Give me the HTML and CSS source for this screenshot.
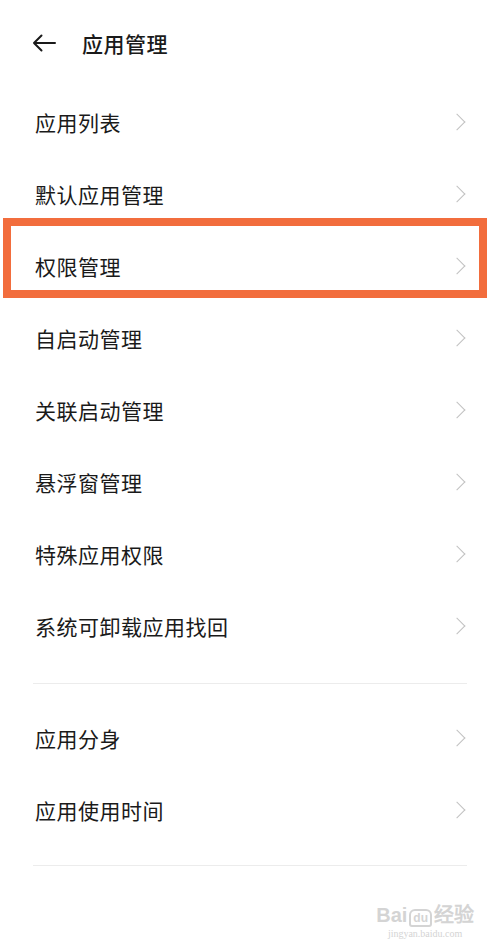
FILE: index.html
```html
<!DOCTYPE html>
<html lang="zh-CN">
<head>
  <meta charset="UTF-8" />
  <meta name="viewport" content="width=device-width, initial-scale=1.0"/>
  <title>应用管理</title>
  <link rel="stylesheet" href="styles.css">
</head>
<body>

  <div class="header">
    <svg class="back" width="24" height="18" viewBox="0 0 24 18">
      <path d="M23 9H2M9.5 1.5L2 9l7.5 7.5" fill="none" stroke="#1a1a1a" stroke-width="2" stroke-linecap="round" stroke-linejoin="round"/>
    </svg>
    <h1>应用管理</h1>
  </div>

  <div class="group">
    <div class="row"><span>应用列表</span><i class="chev"></i></div>
    <div class="row"><span>默认应用管理</span><i class="chev"></i></div>
    <div class="row marked"><span>权限管理</span><i class="chev"></i></div>
    <div class="row"><span>自启动管理</span><i class="chev"></i></div>
    <div class="row"><span>关联启动管理</span><i class="chev"></i></div>
    <div class="row"><span>悬浮窗管理</span><i class="chev"></i></div>
    <div class="row"><span>特殊应用权限</span><i class="chev"></i></div>
    <div class="row"><span>系统可卸载应用找回</span><i class="chev"></i></div>
  </div>

  <div class="divider"></div>

  <div class="group second">
    <div class="row"><span>应用分身</span><i class="chev"></i></div>
    <div class="row"><span>应用使用时间</span><i class="chev"></i></div>
  </div>

  <div class="divider last"></div>

  <div class="watermark">
    <div class="wm-logo">Bai<b>du</b>经验</div>
    <div class="wm-url">jingyan.baidu.com</div>
  </div>

</body>
</html>
```

FILE: styles.css
```css
* { margin: 0; padding: 0; box-sizing: border-box; }
body {
  font-family: "Noto Sans CJK SC", "Noto Sans", sans-serif;
  background: #fff;
  color: #1a1a1a;
  width: 500px;
  height: 951px;
  position: relative;
  overflow: hidden;
}
.header {
  display: flex;
  align-items: center;
  height: 86px;
  padding: 0 0 0 32px;
}
.header .back { margin-right: 26px; margin-top: -1px; }
.header h1 {
  font-size: 21px;
  font-weight: 500;
  letter-spacing: 0.5px;
}
.row {
  display: flex;
  align-items: center;
  justify-content: space-between;
  height: 72px;
  padding: 0 34px 0 35px;
  font-size: 21px;
  letter-spacing: 0.5px;
}
.chev {
  width: 12px;
  height: 12px;
  border-top: 1.5px solid #c2c2c2;
  border-right: 1.5px solid #c2c2c2;
  transform: rotate(45deg);
  margin-right: 3px;
}
.marked { position: relative; }
.marked::after {
  content: "";
  position: absolute;
  left: 3px;
  right: 13px;
  top: -12px;
  bottom: 4px;
  border: 8px solid #f26d3d;
}
.divider {
  height: 1px;
  background: #ececec;
  margin: 21px 33px 18px;
}
.divider.last { margin: 19px 33px 0; }
.watermark {
  position: absolute;
  right: 26px;
  bottom: 12px;
  color: #d4d4d4;
  text-align: center;
  font-family: "Liberation Sans", sans-serif;
}
.wm-logo { font-size: 20px; font-weight: bold; }
.wm-logo b {
  font-size: 12px;
  border: 2px solid #d4d4d4;
  border-radius: 6px 6px 3px 3px;
  padding: 0 2px;
  margin: 0 2px;
}
.wm-url { font-size: 10px; font-family: "Liberation Serif", serif; }
```
